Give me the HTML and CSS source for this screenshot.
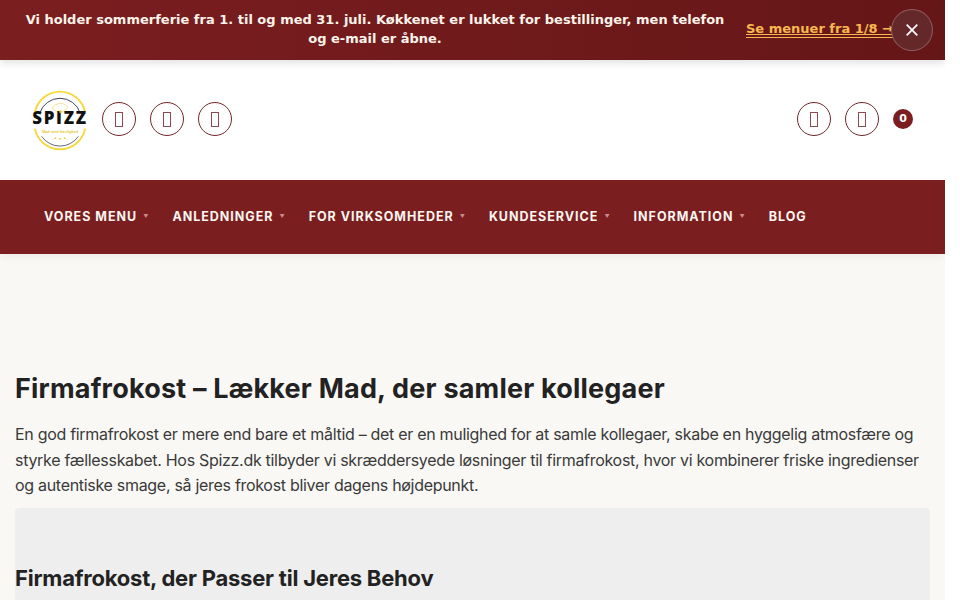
FILE: index.html
```html
<!DOCTYPE html>
<html lang="da">
<head>
<meta charset="utf-8">
<title>Firmafrokost – Spizz.dk</title>
<link rel="stylesheet" href="styles.css">
</head>
<body>
<div class="page">
  <div class="banner">
    <p class="banner-text">Vi holder sommerferie fra 1. til og med 31. juli. Køkkenet er lukket for bestillinger, men telefon og e-mail er åbne.</p>
    <a class="banner-link" href="#">Se menuer fra 1/8 →</a>
    <button class="banner-close" aria-label="Luk">
      <svg viewBox="0 0 12 12" width="12" height="12"><path d="M.7.7l10.6 10.6M11.3.7L.7 11.3" stroke="#fff" stroke-width="1.7" fill="none"/></svg>
    </button>
  </div>
  <header class="head">
    <div class="head-left">
      <svg class="logo" viewBox="0 0 58 58" width="56" height="56">
        <path d="M3 22A26.500 26.500 0 0 1 55 22" fill="none" stroke="#f6d83f" stroke-width="2"/>
        <path d="M3 39A26.500 26.500 0 0 0 55 39" fill="none" stroke="#f6d83f" stroke-width="2"/>
        <path d="M8 23A22 22 0 0 1 50 23" fill="none" stroke="#3b3b55" stroke-width="1"/>
        <path d="M10 47A23 23 0 0 0 48 47" fill="none" stroke="#3b3b55" stroke-width=".8"/>
        <path d="M21 17c1-3 5-3 7-4 3-1 8 1 9 4 0 2-4 3-6 5-1-1-2-1-3-1-3 0-6-1-7-4z" fill="none" stroke="#f4e08c" stroke-width="1"/>
        <text class="logo-word" x="29" y="34.500" text-anchor="middle">SPIZZ</text>
        <circle cx="29.500" cy="21.500" r="1.400" fill="#e5b93a"/>
        <text class="logo-sub" x="29" y="43" text-anchor="middle">Mad med kærlighed</text>
        <path d="M23 49h2M28 49.500h2M33 49h2" stroke="#f0cf4a" stroke-width="1.500"/>
      </svg>
      <span class="icon-btn"><i class="tofu"></i></span>
      <span class="icon-btn"><i class="tofu"></i></span>
      <span class="icon-btn"><i class="tofu"></i></span>
    </div>
    <div class="head-right">
      <span class="icon-btn"><i class="tofu"></i></span>
      <span class="icon-btn"><i class="tofu"></i></span>
      <span class="badge">0</span>
    </div>
  </header>
  <nav class="nav">
    <a class="nav-item">VORES MENU<span class="caret">▼</span></a>
    <a class="nav-item">ANLEDNINGER<span class="caret">▼</span></a>
    <a class="nav-item">FOR VIRKSOMHEDER<span class="caret">▼</span></a>
    <a class="nav-item">KUNDESERVICE<span class="caret">▼</span></a>
    <a class="nav-item">INFORMATION<span class="caret">▼</span></a>
    <a class="nav-item">BLOG</a>
  </nav>
  <main class="content">
    <h1>Firmafrokost – Lækker Mad, der samler kollegaer</h1>
    <p class="lead">En god firmafrokost er mere end bare et måltid – det er en mulighed for at samle kollegaer, skabe en hyggelig atmosfære og styrke fællesskabet. Hos Spizz.dk tilbyder vi skræddersyede løsninger til firmafrokost, hvor vi kombinerer friske ingredienser og autentiske smage, så jeres frokost bliver dagens højdepunkt.</p>
    <section class="card">
      <h2>Firmafrokost, der Passer til Jeres Behov</h2>
    </section>
  </main>
</div>
</body>
</html>
```
FILE: styles.css
```css
html, body { margin: 0; padding: 0; height: 600px; overflow: hidden; background: #fff; }
.page { width: 945px; height: 600px; overflow: hidden; background: #f9f8f5; font-family: Inter, "Liberation Sans", sans-serif; }
.banner { height: 60px; display: flex; align-items: center; background: linear-gradient(90deg, #7b1e20, #651617); box-shadow: 0 3px 8px rgba(0,0,0,.12); position: relative; color: #fff; box-sizing: border-box; padding: 0 12px 2px 15px; }
.banner-text { margin: 0; width: 720px; text-align: center; font: 700 13px/19px "DejaVu Sans", sans-serif; color: #fbf3ea; }
.banner-link { margin-left: 11px; font: 700 13px/16px "DejaVu Sans", sans-serif; color: #f7b84f; border-bottom: 1px solid #f7b84f; white-space: nowrap; }
.banner-close { position: absolute; right: 12px; top: 9px; width: 42px; height: 42px; border-radius: 50%; border: 1px solid rgba(255,255,255,.25); background: #65282a; padding: 0; display: flex; align-items: center; justify-content: center; }
.head { height: 120px; background: #fff; display: flex; align-items: center; justify-content: space-between; padding: 0 32px 2px; box-sizing: border-box; }
.head-left, .head-right { display: flex; align-items: center; gap: 14px; }
.logo { overflow: visible; }
.logo-word { font: 800 17.500px "Open Sans", sans-serif; letter-spacing: 1.800px; fill: #111; }
.logo-sub { font: 700 4px "Liberation Sans", sans-serif; fill: #e7c93a; }
.icon-btn { width: 34px; height: 34px; box-sizing: border-box; border: 1px solid #72272c; border-radius: 50%; display: flex; align-items: center; justify-content: center; background: #fff; }
.tofu { display: block; width: 8px; height: 15px; box-sizing: border-box; border: 1px solid #8a4a50; }
.badge { width: 20px; height: 20px; border-radius: 50%; background: #7b1e20; color: #fff; font: 700 11px/20px "DejaVu Sans", sans-serif; text-align: center; }
.nav { height: 74px; background: #7a1e20; display: flex; align-items: center; padding: 0 0 2px 44px; box-sizing: border-box; gap: 24px; box-shadow: 0 3px 8px rgba(0,0,0,.05); }
.nav-item { color: #fbf6f0; font-weight: 700; font-size: 12.500px; letter-spacing: .98px; display: flex; align-items: center; white-space: nowrap; }
.caret { font-size: 5px; margin-left: 6px; color: #c98b8b; letter-spacing: 0; }
.content { padding: 118px 15px 0; }
h1 { margin: 0 0 16px; font-size: 27px; line-height: 34px; font-weight: 700; color: #222; letter-spacing: .2px; }
.lead { margin: 0 0 9px; font-size: 16px; line-height: 25.600px; color: #3a3a3a; letter-spacing: -.3px; }
.card { background: #eeeeee; border-radius: 4px; height: 200px; padding-top: 55px; box-sizing: border-box; }
h2 { margin: 0; font-size: 22px; line-height: 30px; font-weight: 700; color: #222; letter-spacing: -.22px; }
```
